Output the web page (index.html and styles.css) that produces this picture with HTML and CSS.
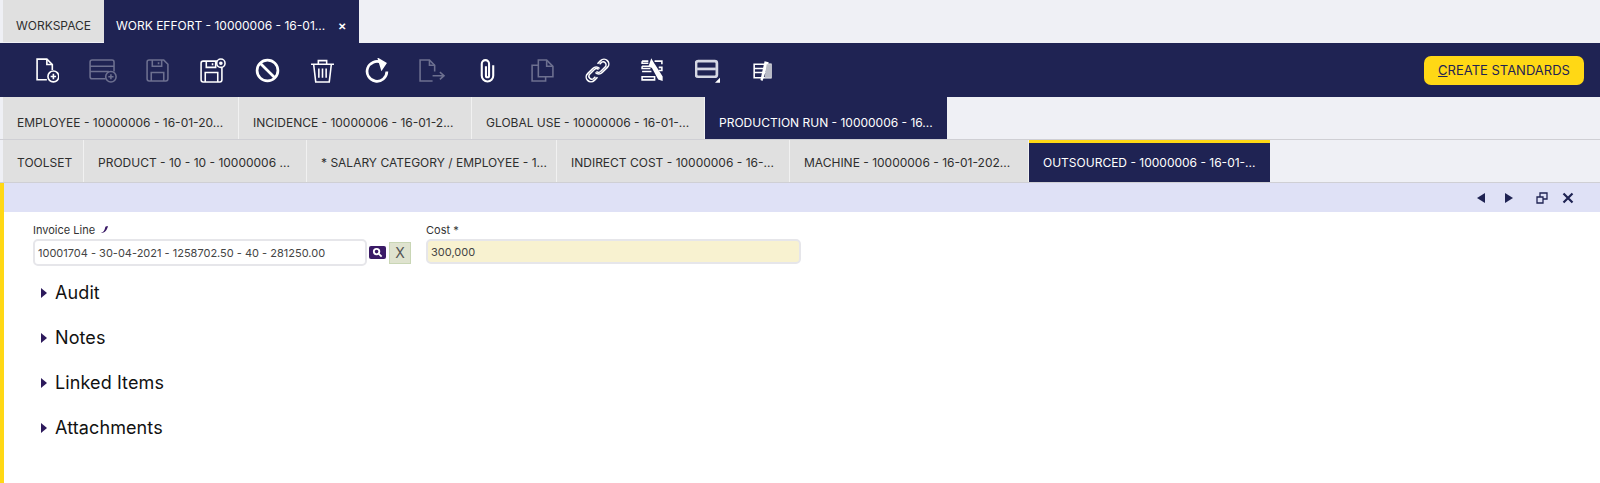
FILE: index.html
```html
<!DOCTYPE html>
<html>
<head>
    <title>Work Effort</title>
    <link rel="stylesheet" href="styles.css">
</head>
<body>
    <div class="tabbar tabbar-main">
        <div class="tab tab-workspace">WORKSPACE</div>
        <div class="tab tab-effort active">WORK EFFORT - 10000006 - 16-01...<span class="tab-close">&#10005;</span></div>
    </div>

    <div class="toolbar">
        <div class="tool-list">
            <div class="tool"><svg viewBox="2 1 22 23"><path d="M12 21H3V2h9l5 5v5"/><path d="M12 2v5h5"/><circle cx="18" cy="18" r="5"/><path d="M15.500 18h5M18 15.500v5"/></svg></div>
            <div class="tool off"><svg viewBox="0 0 28 24"><path d="M17 20H4a2 2 0 0 1-2-2V4a2 2 0 0 1 2-2h19a2 2 0 0 1 2 2v9"/><path d="M2 8h23M2 13h18"/><circle cx="22" cy="18" r="5"/><path d="M19.500 18h5M22 15.500v5"/></svg></div>
            <div class="tool off"><svg viewBox="0 0 24 24"><path d="M2 4a2 2 0 0 1 2-2h14l4 4v14a2 2 0 0 1-2 2H4a2 2 0 0 1-2-2z"/><path d="M7 2v6h9V2M13 4v2M6 22v-8h12v8"/></svg></div>
            <div class="tool"><svg viewBox="0 0 26 24"><path d="M2 5a2 2 0 0 1 2-2h13l5 5v13a2 2 0 0 1-2 2H4a2 2 0 0 1-2-2z"/><path d="M7 3v6h9V3M13 5v2M6 23v-9h12v9"/><circle cx="21" cy="5" r="4" fill="#1f2353"/><circle cx="21" cy="5" r="1" fill="currentColor"/></svg></div>
            <div class="tool"><svg viewBox="0 0 24 24"><circle cx="12" cy="12" r="10" class="thick"/><path d="M5 5l14 14" class="thick"/></svg></div>
            <div class="tool"><svg viewBox="0 0 24 24"><path d="M1 6h22M8 6V2.500h8V6M3.500 6l2 17h13l2-17M8.500 10v9M12 10v9M15.500 10v9"/></svg></div>
            <div class="tool"><svg viewBox="0 0 24 24"><path d="M21 13a9.500 9.500 0 1 1-5-8.500" class="thick"/><path d="M13 1l7 4-4 6z" fill="currentColor"/></svg></div>
            <div class="tool off"><svg viewBox="0 0 28 24"><path d="M14 22H2V2h9l5 5v6"/><path d="M11 2v5h5"/><path d="M14 17h11M21 13.500l4 3.500-4 3.500"/></svg></div>
            <div class="tool"><svg viewBox="0 0 24 24"><path d="M10.500 8v9a1.500 1.500 0 0 0 3 0V5.500a3.500 3.500 0 0 0-7 0V17a5.500 5.500 0 0 0 11 0V7" class="clip"/></svg></div>
            <div class="tool off"><svg viewBox="0 0 24 24"><path d="M8 7H2v15h13v-4"/><path d="M8 2h8l6 6v10H8z"/><path d="M16 2v6h6"/></svg></div>
            <div class="tool"><svg viewBox="0 0 24 24"><path d="M10 14a4.500 4.500 0 0 0 6.500 0l5-5a4.500 4.500 0 0 0-6.500-6.500l-3 3"/><path d="M14 10a4.500 4.500 0 0 0-6.500 0l-5 5a4.500 4.500 0 0 0 6.500 6.500l3-3"/><path d="M11 13a3 3 0 0 0 4 0l5-5a3 3 0 0 0-4-4l-2 2M13 11a3 3 0 0 0-4 0l-5 5a3 3 0 0 0 4 4l2-2"/></svg></div>
            <div class="tool"><svg viewBox="0 0 24 24"><path d="M2 3h6M2 8h8M2 13h9M2 18h12v3H2zM14 3h7v3M18 9h3v3h-3M2 3v2h6M2 8v2h8"/><path d="M11 2l3 5 7 11 0 3-3-1-6-11-3-1z" fill="currentColor"/></svg></div>
            <div class="tool"><svg viewBox="0 0 24 24"><rect x="1" y="3" width="20" height="15" rx="2" class="thick tone"/><path d="M2 10.500h18" class="thick tone"/><path d="M24 20v3h-3z" fill="currentColor"/></svg></div>
            <div class="tool"><svg viewBox="0 0 24 24"><path d="M4 6h16v13H4zM4 10h16M4 14h16" /><path d="M14 3l4 1-6 18-2-1z" fill="#fff" stroke="none"/><path d="M16 6h5v13h-7z" fill="#b9bbc6" stroke="none"/></svg></div>
        </div>
        <button class="btn-standards"><u>C</u>REATE STANDARDS</button>
    </div>

    <div class="tabbar tabbar-sub tabbar-upper">
        <div class="tab tw-employee">EMPLOYEE - 10000006 - 16-01-20...</div>
        <div class="tab tw-incidence">INCIDENCE - 10000006 - 16-01-2...</div>
        <div class="tab tw-global">GLOBAL USE - 10000006 - 16-01-...</div>
        <div class="tab tw-run active">PRODUCTION RUN - 10000006 - 16...</div>
    </div>

    <div class="tabbar tabbar-sub tabbar-lower">
        <div class="tab tw-toolset">TOOLSET</div>
        <div class="tab tw-product">PRODUCT - 10 - 10 - 10000006 ...</div>
        <div class="tab tw-salary">* SALARY CATEGORY / EMPLOYEE - 1...</div>
        <div class="tab tw-indirect">INDIRECT COST - 10000006 - 16-...</div>
        <div class="tab tw-machine">MACHINE - 10000006 - 16-01-202...</div>
        <div class="tab tw-outsourced active current">OUTSOURCED - 10000006 - 16-01-...</div>
    </div>

    <div class="view">
        <div class="view-bar">
            <svg class="nav-icon nav-prev" viewBox="0 0 12 12"><path d="M10 1v10L2 6z" fill="currentColor"/></svg>
            <svg class="nav-icon" viewBox="0 0 12 12"><path d="M2 1v10l8-5z" fill="currentColor"/></svg>
            <svg class="nav-icon nav-restore" viewBox="0 0 12 12"><path d="M1 5h6v6H1zM4 5V1h7v6H7" fill="none" stroke="currentColor" stroke-width="1.300"/></svg>
            <svg class="nav-icon" viewBox="0 0 12 12"><path d="M1.500 1.500l9 9M10.500 1.500l-9 9" stroke="currentColor" stroke-width="2.200"/></svg>
        </div>

        <div class="form">
            <div class="field field-invoice">
                <label>Invoice Line <svg class="pen" viewBox="0 0 10 10"><path d="M1 9c3-1 4-3 5-7l2-1 1 1c-1 1-1 3-3 5-1 1-3 2-5 2z"/></svg></label>
                <div class="field-row">
                    <div class="input">10001704 - 30-04-2021 - 1258702.50 - 40 - 281250.00</div>
                    <div class="btn-search"><svg viewBox="0 0 12 12"><circle cx="5" cy="5" r="3" /><path d="M7.500 7.500L10.500 10.500"/></svg></div>
                    <div class="btn-clear">X</div>
                </div>
            </div>
            <div class="field field-cost">
                <label>Cost *</label>
                <div class="input input-required">300,000</div>
            </div>
        </div>

        <div class="section"><span class="caret"></span>Audit</div>
        <div class="section"><span class="caret"></span>Notes</div>
        <div class="section"><span class="caret"></span>Linked Items</div>
        <div class="section"><span class="caret"></span>Attachments</div>
    </div>
</body>
</html>
```

FILE: styles.css
```css
* {
    box-sizing: border-box;
}

body {
    font-family: Inter, 'Open Sans', sans-serif;
    margin: 0;
    height: 483px;
    overflow: hidden;
    background-color: #eff0f5;
    color: #2b2b2b;
}

.tabbar {
    display: flex;
    padding-left: 3px;
}

.tabbar-main {
    height: 43px;
}

.tabbar-sub {
    height: 43px;
    border-bottom: 1px solid #cfcfd4;
}

.tab {
    display: flex;
    align-items: center;
    padding-left: 14px;
    font-size: 12px;
    white-space: nowrap;
    background-color: #e0e0e0;
    border-right: 1px solid #f1f1f1;
    color: #2e2e2e;
}

.tabbar-main .tab,
.tabbar-upper .tab {
    padding-top: 8px;
}

.tabbar-lower .tab {
    padding-top: 3px;
}

.tab.active {
    background-color: #1f2353;
    color: #fff;
    border-right: none;
}

.tabbar-lower .tab.current {
    padding-top: 0;
    border-top: 3px solid #ffd815;
}

.tab-workspace {
    width: 101px;
    padding-left: 13px;
    border-right: none;
    margin-bottom: 1px;
}

.tab-effort {
    width: 255px;
    padding-left: 12px;
}

.tab-close {
    margin-left: 13px;
    font-size: 10px;
    font-weight: 700;
}

.tw-employee { width: 236px; }
.tw-incidence { width: 233px; }
.tw-global { width: 233px; }
.tw-run { width: 242px; }
.tw-toolset { width: 81px; }
.tw-product { width: 223px; }
.tw-salary { width: 250px; }
.tw-indirect { width: 233px; }
.tw-machine { width: 239px; }
.tw-outsourced { width: 241px; }

.toolbar {
    display: flex;
    justify-content: space-between;
    align-items: center;
    height: 54px;
    padding: 0 16px 0 20px;
    background-color: #1f2353;
}

.tool-list {
    display: flex;
}

.tool {
    display: flex;
    justify-content: center;
    width: 55px;
    color: #fff;
}

.tool.off {
    color: #6d7090;
}

.tool svg {
    height: 25px;
    fill: none;
    stroke: currentColor;
    stroke-width: 1.500;
}

.tool svg .thick {
    stroke-width: 2.600;
}

.tool svg .clip {
    stroke-width: 2;
}

.tool svg .tone {
    stroke: #d5d7e3;
}

.btn-standards {
    width: 160px;
    height: 29px;
    border: none;
    border-radius: 7px;
    background-color: #ffd815;
    color: #1f2353;
    font-family: inherit;
    font-size: 13px;
    padding: 0;
}

.view {
    height: 301px;
    background-color: #fff;
    border-left: 4px solid #ffd815;
}

.view-bar {
    display: flex;
    justify-content: flex-end;
    align-items: center;
    gap: 14px;
    height: 29px;
    padding-right: 26px;
    background-color: #dfe1f6;
    color: #1f2353;
}

.nav-icon {
    width: 12px;
    height: 12px;
}

.nav-prev {
    margin-right: 2px;
}

.nav-restore {
    margin-left: 7px;
}

.form {
    display: flex;
    padding: 11px 0 0 29px;
    height: 58px;
}

.field label {
    display: block;
    font-size: 11px;
    line-height: 15px;
    margin-bottom: 1px;
    color: #333;
}

.field-invoice {
    width: 393px;
}

.field-row {
    display: flex;
    align-items: center;
}

.pen {
    width: 9px;
    height: 9px;
    margin-left: 2px;
    fill: #3a1a66;
}

.input {
    display: flex;
    align-items: center;
    width: 334px;
    height: 27px;
    padding-left: 3px;
    font-size: 11px;
    color: #444;
    background-color: #fff;
    border: 2px solid #e6e6ea;
    border-radius: 5px;
}

.input-required {
    width: 375px;
    height: 25px;
    margin-top: 1px;
    background-color: #f8f2d0;
}

.btn-search {
    display: flex;
    align-items: center;
    justify-content: center;
    width: 17px;
    height: 13px;
    margin-left: 2px;
    border-radius: 2px;
    background-color: #3a1a66;
}

.btn-search svg {
    width: 11px;
    height: 11px;
    fill: none;
    stroke: #fff;
    stroke-width: 2;
}

.btn-clear {
    width: 22px;
    height: 22px;
    margin-left: 3px;
    font-size: 14px;
    line-height: 20px;
    text-align: center;
    color: #555;
    background-color: #dfe3cf;
    border: 1px solid #c9d6b5;
}

.section {
    display: flex;
    align-items: center;
    height: 45px;
    padding-left: 37px;
    font-size: 18px;
    letter-spacing: 0.1px;
    color: #111;
}

.caret {
    width: 0;
    height: 0;
    margin-right: 8px;
    border-left: 6px solid #2d1a5c;
    border-top: 5px solid transparent;
    border-bottom: 5px solid transparent;
}
```
